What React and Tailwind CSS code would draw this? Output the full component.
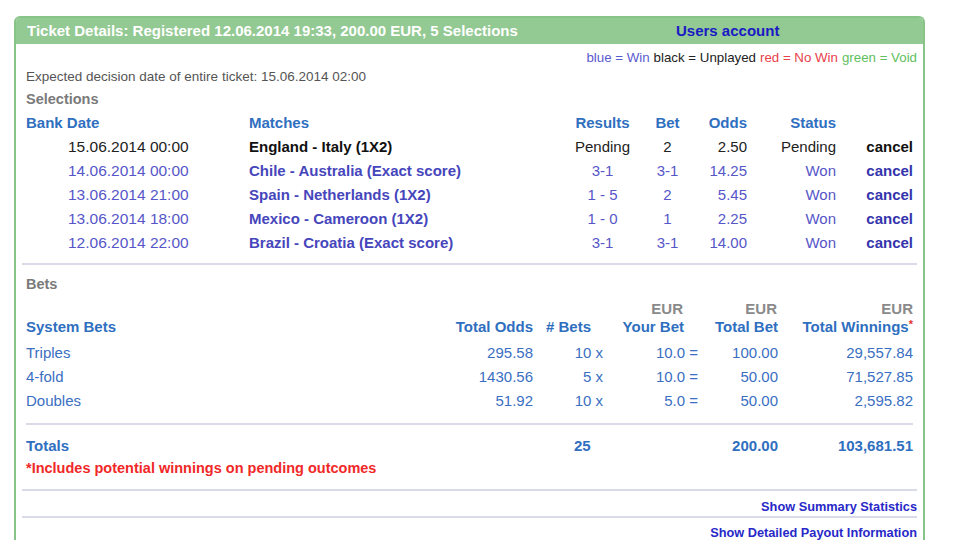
import React from 'react';

const selections = [
  { date: '15.06.2014 00:00', match: 'England - Italy (1X2)', result: 'Pending', bet: '2', odds: '2.50', status: 'Pending', pending: true },
  { date: '14.06.2014 00:00', match: 'Chile - Australia (Exact score)', result: '3-1', bet: '3-1', odds: '14.25', status: 'Won' },
  { date: '13.06.2014 21:00', match: 'Spain - Netherlands (1X2)', result: '1 - 5', bet: '2', odds: '5.45', status: 'Won' },
  { date: '13.06.2014 18:00', match: 'Mexico - Cameroon (1X2)', result: '1 - 0', bet: '1', odds: '2.25', status: 'Won' },
  { date: '12.06.2014 22:00', match: 'Brazil - Croatia (Exact score)', result: '3-1', bet: '3-1', odds: '14.00', status: 'Won' },
];

const systemBets = [
  { name: 'Triples', odds: '295.58', count: '10 x', stake: '10.0 =', total: '100.00', win: '29,557.84' },
  { name: '4-fold', odds: '1430.56', count: '5 x', stake: '10.0 =', total: '50.00', win: '71,527.85' },
  { name: 'Doubles', odds: '51.92', count: '10 x', stake: '5.0 =', total: '50.00', win: '2,595.82' },
];

export default function App() {
  return (
    <div className="h-[540px] overflow-hidden bg-white pt-[16px] pl-[14px]" style={{ fontFamily: '"Liberation Sans", Arial, sans-serif' }}>
      <div className="w-[911px] h-[540px] border-2 border-b-0 border-[#88c488] rounded-t-[6px] overflow-hidden">
        {/* Header */}
        <div className="h-[26px] bg-[#93c993] flex items-center pl-[11px] text-[15px] font-bold">
          <span className="w-[649px] text-white">Ticket Details: Registered 12.06.2014 19:33, 200.00 EUR, 5 Selections</span>
          <span className="text-[#1a1ac4]">Users account</span>
        </div>

        <div className="pl-[10px] pr-[6px]">
          {/* Legend */}
          <div className="h-[16px] mt-[6px] flex items-center justify-end text-[13.3px]">
            <span className="text-[#5a5ad0]">blue = Win</span>
            <span className="text-[#222] ml-[4px]">black = Unplayed</span>
            <span className="text-[#e8404a] ml-[4px]">red = No Win</span>
            <span className="text-[#5ec05e] ml-[4px]">green = Void</span>
          </div>
          <div className="h-[16px] mt-[3px] flex items-center text-[13.5px] text-[#555]">
            Expected decision date of entire ticket: 15.06.2014 02:00
          </div>
          <div className="h-[22px] mt-[4px] flex items-center text-[14.5px] font-bold text-[#7a7a7a]">Selections</div>

          {/* Selections table */}
          <div className="h-[24px] flex items-center text-[15px] font-bold text-[#2f6fc0]">
            <div className="w-[223px]">Bank Date</div>
            <div className="w-[316px]">Matches</div>
            <div className="w-[75px] text-center">Results</div>
            <div className="w-[55px] text-center">Bet</div>
            <div className="w-[52px] text-right">Odds</div>
            <div className="w-[89px] text-right">Status</div>
          </div>
          {selections.map((s) => {
            const color = s.pending ? 'text-[#222]' : 'text-[#5656c8]';
            return (
              <div key={s.date} className={`h-[24px] flex items-center text-[15px] ${color}`}>
                <div className="w-[223px] pl-[42px] text-[15.5px]">{s.date}</div>
                <div className={`w-[316px] font-bold ${s.pending ? 'text-[#111]' : 'text-[#4646bc]'}`}>{s.match}</div>
                <div className="w-[75px] text-center">{s.result}</div>
                <div className="w-[55px] text-center">{s.bet}</div>
                <div className="w-[52px] text-right">{s.odds}</div>
                <div className="w-[89px] text-right">{s.status}</div>
                <div className={`w-[77px] text-right font-bold ${s.pending ? 'text-[#111]' : 'text-[#3434ac]'}`}>cancel</div>
              </div>
            );
          })}

          <div className="h-[2px] bg-[#d9dce8] mt-[8px] -ml-[4px]" />

          {/* Bets */}
          <div className="h-[22px] mt-[9px] flex items-center text-[14.5px] font-bold text-[#7a7a7a]">Bets</div>

          <div className="pr-[4px]">
            <div className="h-[18px] mt-[4px] flex items-center text-[15px] font-bold text-[#8a8a8a]">
              <div className="w-[576px]" />
              <div className="w-[81px] text-right">EUR</div>
              <div className="w-[94px] text-right">EUR</div>
              <div className="flex-1 text-right">EUR</div>
            </div>
            <div className="h-[18px] flex items-center text-[15px] font-bold text-[#2f6fc0]">
              <div className="flex-1">System Bets</div>
              <div className="w-[90px] text-right">Total Odds</div>
              <div className="w-[70px] pl-[13px]">
                # Bets
              </div>
              <div className="w-[95px] text-right pr-[14px]">Your Bet</div>
              <div className="w-[80px] text-right">Total Bet</div>
              <div className="w-[135px] text-right">
                Total Winnings<span className="text-[#e83030] text-[11px] align-top">*</span>
              </div>
            </div>
            <div className="mt-[5px]">
              {systemBets.map((b) => (
                <div key={b.name} className="h-[24px] flex items-center text-[15px] text-[#3a6fc2]">
                  <div className="flex-1">{b.name}</div>
                  <div className="w-[90px] text-right">{b.odds}</div>
                  <div className="w-[70px] text-right">{b.count}</div>
                  <div className="w-[95px] text-right">{b.stake}</div>
                  <div className="w-[80px] text-right">{b.total}</div>
                  <div className="w-[135px] text-right">{b.win}</div>
                </div>
              ))}
            </div>
            <div className="h-[2px] bg-[#d9dce8] mt-[10px]" />
            <div className="h-[23px] mt-[10px] flex items-center text-[15px] font-bold text-[#2f6fc0]">
              <div className="flex-1">Totals</div>
              <div className="w-[90px]" />
              <div className="w-[70px] pl-[41px]">25</div>
              <div className="w-[95px]" />
              <div className="w-[80px] text-right">200.00</div>
              <div className="w-[135px] text-right">103,681.51</div>
            </div>
            <div className="h-[22px] flex items-center text-[14.5px] font-bold text-[#f02828]">
              *Includes potential winnings on pending outcomes
            </div>
          </div>

          <div className="h-[2px] bg-[#d9dce8] mt-[9px] -ml-[4px]" />
          <div className="h-[16px] mt-[8px] flex items-center justify-end text-[12.75px] font-bold text-[#2828c8]">
            Show Summary Statistics
          </div>
          <div className="h-[2px] bg-[#d9dce8] mt-[1px] -ml-[4px]" />
          <div className="h-[14px] mt-[8px] flex items-center justify-end text-[12.75px] leading-[14px] font-bold text-[#2828c8]">
            Show Detailed Payout Information
          </div>
        </div>
      </div>
    </div>
  );
}
